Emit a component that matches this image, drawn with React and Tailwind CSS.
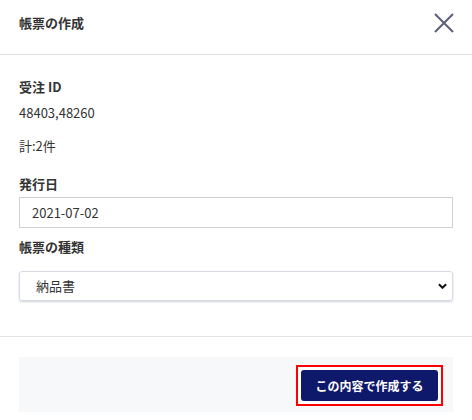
const font = { fontFamily: '"Noto Sans CJK JP", "Noto Sans", sans-serif' }

const App = () => {
  return (
    <div className="w-[472px] h-[420px] bg-white text-[#333333] overflow-hidden" style={font}>
      {/* header */}
      <div className="flex items-center justify-between pl-[19px] pr-[18px] pt-[13px] pb-[21px] border-b border-[#e3e3e6]">
        <h1 className="text-[13px] leading-5 font-bold">帳票の作成</h1>
        <button className="w-5 h-5 text-[#5c6079]">
          <svg viewBox="0 0 20 20" className="w-5 h-5" fill="none" stroke="currentColor" strokeWidth="2">
            <path d="M1 1 19 19M19 1 1 19" />
          </svg>
        </button>
      </div>

      {/* body */}
      <div className="px-[19px] pt-[22px] pb-[35px] border-b border-[#e3e3e6]">
        <p className="text-[13px] leading-5 font-bold">受注 ID</p>
        <p className="text-[13px] leading-5 mt-[6px]">48403,48260</p>
        <p className="text-[13px] leading-5 mt-[13px]">計:2件</p>

        <p className="text-[13px] leading-5 font-bold mt-[18px]">発行日</p>
        <div className="mt-[3px] h-[31px] border border-[#cfd1d8] flex items-center pl-[12px] text-[13px]">
          2021-07-02
        </div>

        <p className="text-[13px] leading-5 font-bold mt-[9px]">帳票の種類</p>
        <div className="mt-[14px] h-[30px] border border-[#d8dbe3] rounded-[3px] shadow-[0_1px_2px_rgba(60,70,110,0.25)] flex items-center justify-between pl-[16px] pr-[5px] text-[13px]">
          <span>納品書</span>
          <svg viewBox="0 0 10 6" className="w-[9px] h-[6px]" fill="none" stroke="#111" strokeWidth="2.2">
            <path d="M1 1l4 4 4-4" />
          </svg>
        </div>
      </div>

      {/* footer */}
      <div className="px-[19px] pt-[20px]">
        <div className="h-[55px] bg-[#f7f8fa] flex items-start justify-end pr-[10px] pt-[8px]">
          <div className="border-2 border-[#ff0000] bg-white p-[3px]">
            <button className="block w-[137px] h-[31px] rounded-[3px] bg-[#0f196b] text-white text-[12px] font-bold">
              この内容で作成する
            </button>
          </div>
        </div>
      </div>
    </div>
  )
}

export default App
